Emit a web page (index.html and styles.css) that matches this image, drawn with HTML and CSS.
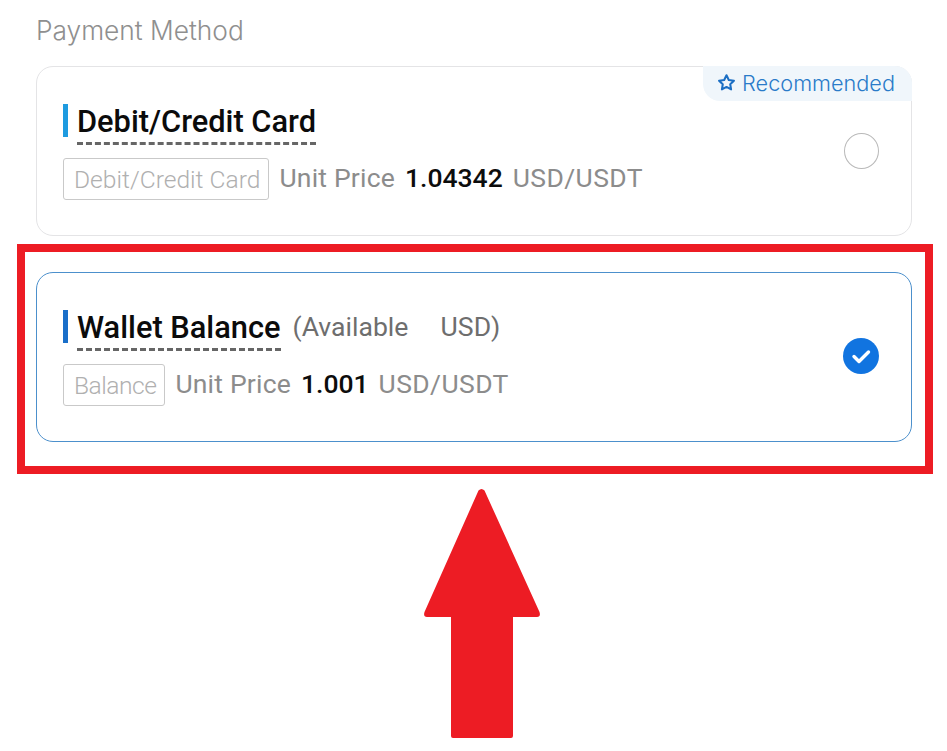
FILE: index.html
```html
<!DOCTYPE html>
<html lang="en">
<head>
<meta charset="utf-8">
<title>Payment Method</title>
<link rel="stylesheet" href="styles.css">
</head>
<body>
<main class="page">
  <h2 class="heading">Payment Method</h2>
  <section class="card">
    <div class="badge">
      <svg class="star" viewBox="0 0 24 24" aria-hidden="true"><path d="M12 2.800l2.900 6 6.500.9-4.700 4.500 1.100 6.500L12 17.600l-5.800 3.100 1.100-6.500-4.700-4.500 6.500-.9z"/></svg>
      <span>Recommended</span>
    </div>
    <div class="info">
      <div class="title-row">
        <span class="accent"></span>
        <span class="title">Debit/Credit Card</span>
      </div>
      <div class="price-row">
        <span class="tag">Debit/Credit Card</span>
        <span class="muted">Unit Price</span>
        <span class="value">1.04342</span>
        <span class="muted muted-unit">USD/USDT</span>
      </div>
    </div>
    <span class="radio"></span>
  </section>
  <div class="highlight">
    <section class="card card-selected">
      <div class="info">
        <div class="title-row">
          <span class="accent accent-dark"></span>
          <span class="title">Wallet Balance</span>
          <span class="available">(Available <span class="gap"></span> USD)</span>
        </div>
        <div class="price-row">
          <span class="tag tag-short">Balance</span>
          <span class="muted">Unit Price</span>
          <span class="value">1.001</span>
          <span class="muted muted-unit">USD/USDT</span>
        </div>
      </div>
      <span class="radio-on">
        <svg viewBox="0 0 36 36" aria-hidden="true"><path d="M11 18.500l5 5 9.500-9.500"/></svg>
      </span>
    </section>
  </div>
  <svg class="arrow" viewBox="0 0 118 252" aria-hidden="true">
    <path d="M55.500 2.500Q58.500-.5 61.500 2.500L116.500 124Q118 129 114 129H90V248Q90 250 88 250H30Q28 250 28 248V129H4Q0 129 1.500 124Z"/>
  </svg>
</main>
</body>
</html>
```
FILE: styles.css
```css
* { box-sizing: border-box; }

html, body { margin: 0; padding: 0; background: #fff; }

body {
  width: 947px;
  height: 751px;
  overflow: hidden;
  font-family: Roboto, "Liberation Sans", sans-serif;
}

.page {
  display: flex;
  flex-direction: column;
  padding: 15px 0 0 36px;
}

.heading {
  margin: 0 0 19px;
  font-family: Inter, Roboto, sans-serif;
  font-size: 26.300px;
  line-height: 32px;
  font-weight: 300;
  color: #8f8f8f;
}

.card {
  position: relative;
  display: flex;
  align-items: center;
  justify-content: space-between;
  width: 876px;
  height: 170px;
  padding: 1px 32px 0 26px;
  border: 1px solid #e4e4e6;
  border-radius: 17px;
  background: #fff;
}

.card-selected { border-color: #4c90cc; }

.badge {
  position: absolute;
  top: -1px;
  right: -1px;
  display: flex;
  align-items: center;
  gap: 6px;
  height: 35px;
  padding: 0 17px 2px 14px;
  border-radius: 0 17px 0 17px;
  background: #f0f6fb;
  color: #2a7bc9;
  font-family: Inter, Roboto, sans-serif;
  font-size: 21.700px;
  font-weight: 300;
}

.star {
  width: 19px;
  height: 19px;
  fill: none;
  stroke: #1c6fc4;
  stroke-width: 2.600;
  stroke-linejoin: round;
}

.info {
  display: flex;
  flex-direction: column;
  gap: 13px;
}

.title-row {
  display: flex;
  align-items: flex-start;
  height: 41px;
}

.accent {
  width: 5px;
  height: 33px;
  margin: 0 9px 0 0;
  background: #1e9be0;
}

.accent-dark { background: #1a6fc9; }

.title {
  padding-bottom: 2px;
  border-bottom: 3px dashed #666;
  color: #0b0b0b;
  font-size: 30.800px;
  line-height: 36px;
  font-weight: 500;
}

.available {
  margin-left: 12px;
  color: #6e6e6e;
  font-size: 26.600px;
  line-height: 33px;
}

.gap {
  display: inline-block;
  width: 19px;
}

.price-row {
  display: flex;
  align-items: center;
  gap: 10px;
  height: 42px;
  font-size: 26.500px;
}

.tag {
  display: flex;
  align-items: center;
  height: 42px;
  padding: 2px 8px 0 10px;
  border: 1px solid #c9c9c9;
  border-radius: 3px;
  color: #b0b0b0;
  font-size: 24.600px;
  font-weight: 300;
}

.tag-short { letter-spacing: -.5px; }

.muted {
  margin-top: -3px;
  color: #8c8c8c;
  letter-spacing: .2px;
}

.muted-unit { letter-spacing: .4px; }

.value {
  margin-top: -3px;
  color: #0c0c0c;
  font-weight: 500;
}

.radio, .radio-on {
  flex: none;
  border-radius: 50%;
}

.radio {
  width: 35px;
  height: 36px;
  margin-top: -2px;
  border: 1.500px solid #b9b9b9;
}

.radio-on {
  width: 36px;
  height: 36px;
  margin-top: -3px;
  background: #1174e0;
}

.radio-on svg {
  display: block;
  fill: none;
  stroke: #fff;
  stroke-width: 3.400;
  stroke-linecap: round;
  stroke-linejoin: round;
}

.highlight {
  width: 916px;
  height: 230px;
  margin: 8px 0 0 -19px;
  padding: 20px 0 0 11px;
  border: 8px solid #ed1c24;
}

.arrow {
  width: 118px;
  height: 252px;
  margin: 14px 0 0 387px;
  fill: #ed1c24;
}
```
